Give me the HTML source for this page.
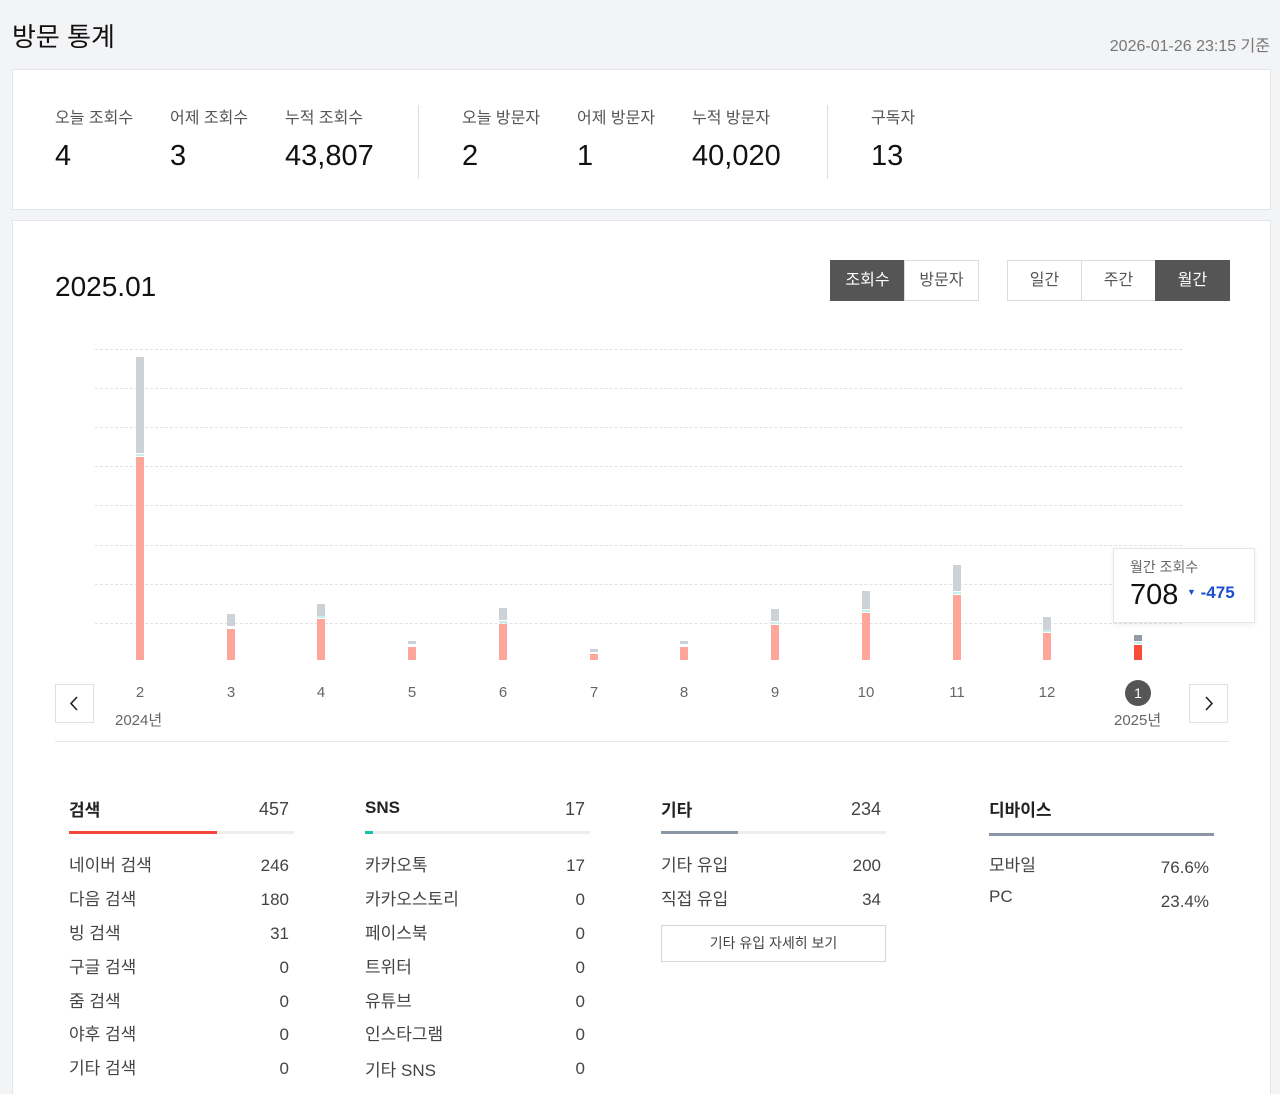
<!DOCTYPE html>
<html><head><meta charset="utf-8"><style>
*{margin:0;padding:0;box-sizing:border-box}
html,body{width:1280px;height:1094px;overflow:hidden}
body{background:#f3f4f6;font-family:"Liberation Sans","Noto Sans CJK KR",sans-serif;color:#222;position:relative}
.a{position:absolute;white-space:nowrap}
.card{position:absolute;background:#fff;border:1px solid #e3e5ea}
.lbl{font-size:16px;color:#555}
.num{font-size:29px;color:#111}
.g{position:absolute;left:95px;width:1087px;border-top:1px dashed #e2e2e2;height:0}
.bg{position:absolute;width:8px;background:#cdd2d7}
.br{position:absolute;width:8px;background:#ffa59a;bottom:434px}
.bm{position:absolute;width:8px;height:2px;background:#c8eee8}
.xl{position:absolute;top:684px;font-size:15px;color:#666;width:40px;text-align:center}
.btn{position:absolute;top:260px;height:41px;border:1px solid #d8dce3;font-size:16px;color:#555;text-align:center;line-height:40px;background:#fff}
.dk{background:#555;color:#fff;border-color:#555}
.row{position:absolute;font-size:17px;color:#444}
.rv{position:absolute;font-size:17px;color:#444;text-align:right}
.hd{position:absolute;font-size:17px;font-weight:bold;color:#222}
.hv{position:absolute;font-size:18px;color:#444;text-align:right}
</style></head><body>
<div class="a" style="left:12px;top:17px;font-size:26px;color:#111">방문 통계</div>
<div class="a" style="right:10px;top:32px;font-size:16px;color:#777">2026-01-26 23:15 기준</div>

<div class="card" style="left:12px;top:69px;width:1259px;height:141px"></div>
<div class="a lbl" style="left:55px;top:104px">오늘 조회수</div><div class="a num" style="left:55px;top:140px">4</div>
<div class="a lbl" style="left:170px;top:104px">어제 조회수</div><div class="a num" style="left:170px;top:140px">3</div>
<div class="a lbl" style="left:285px;top:104px">누적 조회수</div><div class="a num" style="left:285px;top:140px">43,807</div>
<div class="a" style="left:418px;top:105px;width:1px;height:74px;background:#ddd"></div>
<div class="a lbl" style="left:462px;top:104px">오늘 방문자</div><div class="a num" style="left:462px;top:140px">2</div>
<div class="a lbl" style="left:577px;top:104px">어제 방문자</div><div class="a num" style="left:577px;top:140px">1</div>
<div class="a lbl" style="left:692px;top:104px">누적 방문자</div><div class="a num" style="left:692px;top:140px">40,020</div>
<div class="a" style="left:827px;top:105px;width:1px;height:74px;background:#ddd"></div>
<div class="a lbl" style="left:871px;top:104px">구독자</div><div class="a num" style="left:871px;top:140px">13</div>

<div class="card" style="left:12px;top:220px;width:1259px;height:890px"></div>
<div class="a" style="left:55px;top:271px;font-size:28px;color:#111">2025.01</div>
<div class="btn dk" style="left:830px;width:75px">조회수</div>
<div class="btn" style="left:904px;width:75px">방문자</div>
<div class="btn" style="left:1007px;width:75px">일간</div>
<div class="btn" style="left:1081px;width:75px">주간</div>
<div class="btn dk" style="left:1155px;width:75px">월간</div>

<div class="g" style="top:349px"></div><div class="g" style="top:388px"></div><div class="g" style="top:427px"></div><div class="g" style="top:466px"></div><div class="g" style="top:505px"></div><div class="g" style="top:545px"></div><div class="g" style="top:584px"></div><div class="g" style="top:623px"></div>

<div class="bg" style="left:136px;top:357px;height:96px"></div><div class="bm" style="left:136px;top:454px"></div><div class="br" style="left:136px;top:457px"></div>
<div class="bg" style="left:227px;top:614px;height:12px"></div><div class="br" style="left:227px;top:629px"></div>
<div class="bg" style="left:317px;top:604px;height:12px"></div><div class="bm" style="left:317px;top:616px"></div><div class="br" style="left:317px;top:619px"></div>
<div class="bg" style="left:408px;top:641px;height:3px"></div><div class="br" style="left:408px;top:647px"></div>
<div class="bg" style="left:499px;top:608px;height:12px"></div><div class="bm" style="left:499px;top:621px"></div><div class="br" style="left:499px;top:624px"></div>
<div class="bg" style="left:590px;top:649px;height:3px"></div><div class="br" style="left:590px;top:654px"></div>
<div class="bg" style="left:680px;top:641px;height:3px"></div><div class="br" style="left:680px;top:647px"></div>
<div class="bg" style="left:771px;top:609px;height:12px"></div><div class="bm" style="left:771px;top:622px"></div><div class="br" style="left:771px;top:625px"></div>
<div class="bg" style="left:862px;top:591px;height:18px"></div><div class="bm" style="left:862px;top:610px"></div><div class="br" style="left:862px;top:613px"></div>
<div class="bg" style="left:953px;top:565px;height:26px"></div><div class="bm" style="left:953px;top:592px"></div><div class="br" style="left:953px;top:595px"></div>
<div class="bg" style="left:1043px;top:617px;height:13px"></div><div class="bm" style="left:1043px;top:630px"></div><div class="br" style="left:1043px;top:633px"></div>
<div class="bg" style="left:1134px;top:635px;height:6px;background:#959ca6"></div><div class="bm" style="left:1134px;top:642px"></div><div class="br" style="left:1134px;top:645px;background:#fa4a3a"></div>

<div class="a" style="left:1113px;top:548px;width:142px;height:75px;background:#fff;border:1px solid #e3e6ec;box-shadow:0 2px 6px rgba(0,0,0,.06)"></div>
<div class="a" style="left:1130px;top:557px;font-size:14px;color:#666">월간 조회수</div>
<div class="a" style="left:1130px;top:579px;font-size:29px;color:#111">708</div>
<div class="a" style="left:1187px;top:583px;font-size:17px;font-weight:bold;color:#1a4fd0"><span style="font-size:9px;vertical-align:3px">▼</span> -475</div>

<div class="a" style="left:55px;top:684px;width:39px;height:39px;border:1px solid #dde0e6;background:#fff"><svg width="37" height="37"><path d="M21 12 L15 18.5 L21 25" stroke="#222" stroke-width="1.6" fill="none"/></svg></div>
<div class="a" style="left:1189px;top:684px;width:39px;height:39px;border:1px solid #dde0e6;background:#fff"><svg width="37" height="37"><path d="M16 12 L22 18.5 L16 25" stroke="#222" stroke-width="1.6" fill="none"/></svg></div>

<div class="xl" style="left:120px">2</div><div class="xl" style="left:211px">3</div><div class="xl" style="left:301px">4</div><div class="xl" style="left:392px">5</div><div class="xl" style="left:483px">6</div><div class="xl" style="left:574px">7</div><div class="xl" style="left:664px">8</div><div class="xl" style="left:755px">9</div><div class="xl" style="left:846px">10</div><div class="xl" style="left:937px">11</div><div class="xl" style="left:1027px">12</div>
<div class="a" style="left:1125px;top:680px;width:26px;height:26px;border-radius:50%;background:#555;color:#fff;font-size:14px;text-align:center;line-height:26px">1</div>
<div class="a" style="left:115px;top:709px;font-size:15px;color:#666">2024년</div>
<div class="a" style="left:1114px;top:709px;font-size:15px;color:#666">2025년</div>
<div class="a" style="left:55px;top:741px;width:1174px;height:1px;background:#e8e8e8"></div>

<div class="hd" style="left:69px;top:796px">검색</div><div class="hv" style="left:220px;width:69px;top:799px">457</div>
<div class="a" style="left:69px;top:831px;width:225px;height:3px;background:#eee"></div><div class="a" style="left:69px;top:831px;width:148px;height:3px;background:#f5473c"></div>
<div class="hd" style="left:365px;top:798px">SNS</div><div class="hv" style="left:520px;width:65px;top:799px">17</div>
<div class="a" style="left:365px;top:831px;width:225px;height:3px;background:#eee"></div><div class="a" style="left:365px;top:831px;width:8px;height:3px;background:#1bbfa8"></div>
<div class="hd" style="left:661px;top:796px">기타</div><div class="hv" style="left:800px;width:81px;top:799px">234</div>
<div class="a" style="left:661px;top:831px;width:225px;height:3px;background:#eee"></div><div class="a" style="left:661px;top:831px;width:77px;height:3px;background:#8a96a3"></div>
<div class="hd" style="left:989px;top:796px">디바이스</div>
<div class="a" style="left:989px;top:833px;width:225px;height:3px;background:#8a96a3"></div>

<div class="row" style="left:69px;top:851px">네이버 검색</div><div class="rv" style="left:220px;width:69px;top:856px">246</div>
<div class="row" style="left:69px;top:885px">다음 검색</div><div class="rv" style="left:220px;width:69px;top:890px">180</div>
<div class="row" style="left:69px;top:919px">빙 검색</div><div class="rv" style="left:220px;width:69px;top:924px">31</div>
<div class="row" style="left:69px;top:953px">구글 검색</div><div class="rv" style="left:220px;width:69px;top:958px">0</div>
<div class="row" style="left:69px;top:987px">줌 검색</div><div class="rv" style="left:220px;width:69px;top:992px">0</div>
<div class="row" style="left:69px;top:1020px">야후 검색</div><div class="rv" style="left:220px;width:69px;top:1025px">0</div>
<div class="row" style="left:69px;top:1054px">기타 검색</div><div class="rv" style="left:220px;width:69px;top:1059px">0</div>

<div class="row" style="left:365px;top:851px">카카오톡</div><div class="rv" style="left:520px;width:65px;top:856px">17</div>
<div class="row" style="left:365px;top:885px">카카오스토리</div><div class="rv" style="left:520px;width:65px;top:890px">0</div>
<div class="row" style="left:365px;top:919px">페이스북</div><div class="rv" style="left:520px;width:65px;top:924px">0</div>
<div class="row" style="left:365px;top:953px">트위터</div><div class="rv" style="left:520px;width:65px;top:958px">0</div>
<div class="row" style="left:365px;top:987px">유튜브</div><div class="rv" style="left:520px;width:65px;top:992px">0</div>
<div class="row" style="left:365px;top:1020px">인스타그램</div><div class="rv" style="left:520px;width:65px;top:1025px">0</div>
<div class="row" style="left:365px;top:1056px">기타 SNS</div><div class="rv" style="left:520px;width:65px;top:1059px">0</div>

<div class="row" style="left:661px;top:851px">기타 유입</div><div class="rv" style="left:800px;width:81px;top:856px">200</div>
<div class="row" style="left:661px;top:885px">직접 유입</div><div class="rv" style="left:800px;width:81px;top:890px">34</div>
<div class="a" style="left:661px;top:925px;width:225px;height:37px;border:1px solid #d2d6dd;font-size:14px;color:#444;text-align:center;line-height:35px">기타 유입 자세히 보기</div>

<div class="row" style="left:989px;top:851px">모바일</div><div class="rv" style="left:1120px;width:89px;top:858px">76.6%</div>
<div class="row" style="left:989px;top:887px">PC</div><div class="rv" style="left:1120px;width:89px;top:892px">23.4%</div>
</body></html>
